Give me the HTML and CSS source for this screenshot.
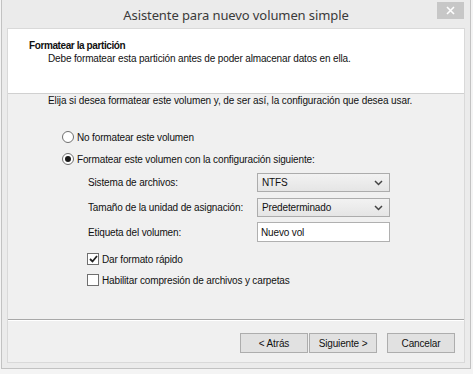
FILE: index.html
```html
<!DOCTYPE html>
<html lang="es">
<head>
  <meta charset="UTF-8">
  <title>Asistente para nuevo volumen simple</title>
  <link rel="stylesheet" href="styles.css">
</head>
<body>

<div class="window">
  <div class="titlebar">
    <span class="title">Asistente para nuevo volumen simple</span>
    <div class="close-btn">
      <svg width="9" height="9" viewBox="0 0 9 9"><path d="M1 1 L8 8 M8 1 L1 8" stroke="#fff" stroke-width="1.6"/></svg>
    </div>
  </div>

  <div class="client">
    <!-- Header -->
    <div class="header">
      <div class="header-title">Formatear la partición</div>
      <div class="header-sub">Debe formatear esta partición antes de poder almacenar datos en ella.</div>
    </div>

    <!-- Body -->
    <div class="body">
      <div class="intro">Elija si desea formatear este volumen y, de ser así, la configuración que desea usar.</div>

      <div class="row radio-row first">
        <span class="radio"></span>
        <span>No formatear este volumen</span>
      </div>
      <div class="row radio-row">
        <span class="radio checked"></span>
        <span>Formatear este volumen con la configuración siguiente:</span>
      </div>

      <div class="row field-row r-fs">
        <span class="field-label">Sistema de archivos:</span>
        <div class="combo">
          <span>NTFS</span>
          <svg width="9" height="6" viewBox="0 0 9 6"><path d="M1 1 L4.5 4.5 L8 1" fill="none" stroke="#444" stroke-width="1.5"/></svg>
        </div>
      </div>
      <div class="row field-row r-size">
        <span class="field-label">Tamaño de la unidad de asignación:</span>
        <div class="combo">
          <span>Predeterminado</span>
          <svg width="9" height="6" viewBox="0 0 9 6"><path d="M1 1 L4.5 4.5 L8 1" fill="none" stroke="#444" stroke-width="1.5"/></svg>
        </div>
      </div>
      <div class="row field-row r-label">
        <span class="field-label">Etiqueta del volumen:</span>
        <div class="textbox">Nuevo vol</div>
      </div>

      <div class="row check-row c-first">
        <span class="check">
          <svg width="9" height="8" viewBox="0 0 9 8"><path d="M1 4 L3.5 6.5 L8 1" fill="none" stroke="#222" stroke-width="1.8"/></svg>
        </span>
        <span>Dar formato rápido</span>
      </div>
      <div class="row check-row c-second">
        <span class="check"></span>
        <span>Habilitar compresión de archivos y carpetas</span>
      </div>
    </div>

    <!-- Footer -->
    <div class="footer">
      <div class="btn">&lt; Atrás</div>
      <div class="btn btn-next">Siguiente &gt;</div>
      <div class="btn btn-cancel">Cancelar</div>
    </div>
  </div>
</div>

</body>
</html>
```

FILE: styles.css
```css
html, body {
  margin: 0;
  padding: 0;
}
body {
  background: #f4f4f4;
  font-family: "Liberation Sans", Arial, sans-serif;
  font-size: 10px;
  color: #111;
  width: 473px;
  height: 374px;
  overflow: hidden;
}
.window {
  box-sizing: border-box;
  width: 470px;
  height: 369px;
  margin-left: 1px;
  border: 1px solid #c2c2c2;
  border-top: none;
  background: #ebebeb;
  padding: 0 5px 5px 5px;
  display: flex;
  flex-direction: column;
}
.titlebar {
  position: relative;
  height: 28px;
  display: flex;
  align-items: center;
  justify-content: center;
}
.title {
  font-family: "Noto Sans", "Open Sans", sans-serif;
  font-size: 13px;
  letter-spacing: -0.1px;
  color: #3a3a3a;
  padding-top: 2px;
}
.close-btn {
  position: absolute;
  top: 2px;
  right: 1px;
  width: 27px;
  height: 17px;
  background: #c7c7c7;
  display: flex;
  align-items: center;
  justify-content: center;
}
.client {
  flex: 1;
  border: 1px solid #d9d9d9;
  background: #f0f0f0;
  display: flex;
  flex-direction: column;
}
.header {
  height: 65px;
  background: #fff;
  border-bottom: 1px solid #d0d0d0;
  padding: 11px 0 0 21px;
  box-sizing: border-box;
}
.header-title {
  font-weight: bold;
  line-height: 12px;
  letter-spacing: -0.4px;
}
.header-sub {
  line-height: 14px;
  padding-left: 19px;
  letter-spacing: -0.15px;
}
.body {
  height: 225px;
  padding-left: 40px;
  border-bottom: 1px solid #a8a8a8;
  box-shadow: 0 1px 0 #fff;
}
.intro {
  line-height: 14px;
  letter-spacing: -0.1px;
}
.row {
  display: flex;
  align-items: center;
  letter-spacing: -0.15px;
}
.radio-row {
  height: 14px;
  margin-top: 8px;
  padding-left: 14px;
  gap: 3px;
}
.radio-row.first {
  margin-top: 22px;
}
.radio {
  width: 10px;
  height: 10px;
  border: 1px solid #6f6f6f;
  border-radius: 50%;
  background: #fff;
  display: flex;
  align-items: center;
  justify-content: center;
}
.radio.checked::after {
  content: "";
  width: 6px;
  height: 6px;
  border-radius: 50%;
  background: #1a1a1a;
}
.field-row {
  padding-left: 40px;
}
.field-label {
  width: 169px;
}
.r-fs {
  margin-top: 7px;
  height: 19px;
}
.r-size {
  margin-top: 6px;
  height: 19px;
}
.r-label {
  margin-top: 5px;
  height: 20px;
}
.combo, .textbox {
  box-sizing: border-box;
  width: 133px;
  height: 100%;
  border: 1px solid #acacac;
  display: flex;
  align-items: center;
  padding: 0 6px 0 4px;
}
.combo {
  justify-content: space-between;
  background: linear-gradient(#f2f2f2, #e5e5e5);
}
.textbox {
  background: #fff;
  border-color: #b0b0b0;
  padding-left: 3px;
}
.check-row {
  height: 14px;
  padding-left: 39px;
  gap: 3px;
}
.c-first {
  margin-top: 10px;
}
.c-second {
  margin-top: 7px;
}
.check {
  box-sizing: border-box;
  width: 12px;
  height: 12px;
  border: 1px solid #6f6f6f;
  background: #fff;
  display: flex;
  align-items: center;
  justify-content: center;
}
.footer {
  flex: 1;
  display: flex;
  justify-content: flex-end;
  align-items: flex-start;
  padding: 13px 9px 0 0;
}
.btn {
  box-sizing: border-box;
  width: 68px;
  height: 20px;
  border: 1px solid #adadad;
  background: #e1e1e1;
  display: flex;
  align-items: center;
  justify-content: center;
  letter-spacing: -0.15px;
}
.btn-next {
  margin-left: 1px;
}
.btn-cancel {
  margin-left: 10px;
}
```
